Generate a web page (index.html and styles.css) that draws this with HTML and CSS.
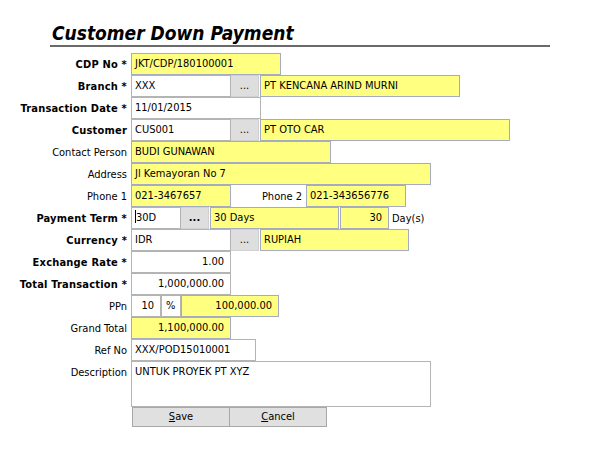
FILE: index.html
```html
<!DOCTYPE html>
<html>
<head>
<meta charset="utf-8">
<link rel="stylesheet" href="styles.css">
</head>
<body>
<div class="page">
  <div class="title-bar"><h1 class="title">Customer Down Payment</h1></div>
  <div class="form">
    <div class="row">
      <div class="lbl b">CDP No *</div>
      <div class="box y w150">JKT/CDP/180100001</div>
    </div>
    <div class="row">
      <div class="lbl b">Branch *</div>
      <div class="box w100">XXX</div>
      <div class="btn">...</div>
      <div class="box y w200 gap">PT KENCANA ARIND MURNI</div>
    </div>
    <div class="row">
      <div class="lbl b">Transaction Date *</div>
      <div class="box w130">11/01/2015</div>
    </div>
    <div class="row">
      <div class="lbl b">Customer</div>
      <div class="box w100">CUS001</div>
      <div class="btn">...</div>
      <div class="box y w250 gap">PT OTO CAR</div>
    </div>
    <div class="row">
      <div class="lbl">Contact Person</div>
      <div class="box y w200">BUDI GUNAWAN</div>
    </div>
    <div class="row">
      <div class="lbl">Address</div>
      <div class="box y w300">Jl Kemayoran No 7</div>
    </div>
    <div class="row">
      <div class="lbl">Phone 1</div>
      <div class="box y w100">021-3467657</div>
      <div class="sublbl">Phone 2</div>
      <div class="box y w100">021-343656776</div>
    </div>
    <div class="row">
      <div class="lbl b">Payment Term *</div>
      <div class="box w50"><span class="caret"></span>30D</div>
      <div class="btn bold">...</div>
      <div class="box y w129 gap">30 Days</div>
      <div class="box y w49 gap num">30</div>
      <div class="unit">Day(s)</div>
    </div>
    <div class="row">
      <div class="lbl b">Currency *</div>
      <div class="box w100">IDR</div>
      <div class="btn">...</div>
      <div class="box y w149 gap">RUPIAH</div>
    </div>
    <div class="row">
      <div class="lbl b">Exchange Rate *</div>
      <div class="box w100 num">1.00</div>
    </div>
    <div class="row">
      <div class="lbl b">Total Transaction *</div>
      <div class="box w100 num">1,000,000.00</div>
    </div>
    <div class="row">
      <div class="lbl">PPn</div>
      <div class="box w30 num">10</div>
      <div class="box w20 pct">%</div>
      <div class="box y w98 num">100,000.00</div>
    </div>
    <div class="row">
      <div class="lbl">Grand Total</div>
      <div class="box y w100 num">1,100,000.00</div>
    </div>
    <div class="row">
      <div class="lbl">Ref No</div>
      <div class="box w125">XXX/POD15010001</div>
    </div>
    <div class="row tall">
      <div class="lbl top">Description</div>
      <div class="box w300 area">UNTUK PROYEK PT XYZ</div>
    </div>
    <div class="row actions">
      <div class="lbl"></div>
      <div class="action"><u>S</u>ave</div>
      <div class="action"><u>C</u>ancel</div>
    </div>
  </div>
</div>
</body>
</html>
```
FILE: styles.css
```css
html, body {
  margin: 0;
  padding: 0;
  background: #fff;
}
body {
  font-family: "DejaVu Sans Condensed", "DejaVu Sans", sans-serif;
  font-size: 11px;
  color: #000;
}
.page {
  padding-top: 21px;
}
.title-bar {
  margin-left: 50px;
  width: 500px;
  border-bottom: 2px solid #6a6a6a;
  padding-left: 2px;
  box-sizing: border-box;
}
.title {
  margin: 0;
  font-family: "DejaVu Sans Condensed", "DejaVu Sans", sans-serif;
  font-size: 19px;
  font-weight: bold;
  font-style: italic;
  line-height: 24px;
}
.form {
  margin-top: 6px;
  display: flex;
  flex-direction: column;
}
.row {
  display: flex;
  align-items: center;
  height: 22px;
}
.row.tall {
  height: 46px;
  align-items: flex-start;
}
.row.actions {
  height: 20px;
}
.lbl {
  width: 131px;
  flex: none;
  box-sizing: border-box;
  padding-right: 4px;
  text-align: right;
  white-space: nowrap;
}
.lbl.b {
  font-weight: bold;
  letter-spacing: 0.2px;
}
.lbl.top {
  padding-top: 5px;
}
.box {
  flex: none;
  height: 22px;
  box-sizing: border-box;
  border: 1px solid #b4b4b4;
  background: #fff;
  padding: 0 3px;
  line-height: 20px;
  white-space: nowrap;
  overflow: hidden;
  position: relative;
}
.box.y {
  background: #ffff80;
  border-color: #a4abc2;
}
.box.gap {
  margin-left: 1px;
}
.box.num {
  text-align: right;
  padding-right: 6px;
}
.box.pct {
  padding: 0 0 0 4px;
}
.box.area {
  height: 46px;
  line-height: 16px;
  padding-top: 2px;
}
.w20 { width: 20px; }
.w30 { width: 30px; }
.w49 { width: 49px; }
.w50 { width: 50px; }
.w98 { width: 98px; }
.w100 { width: 100px; }
.w125 { width: 125px; }
.w129 { width: 129px; }
.w130 { width: 130px; }
.w149 { width: 149px; }
.w150 { width: 150px; }
.w200 { width: 200px; }
.w250 { width: 250px; }
.w300 { width: 300px; }
.btn {
  flex: none;
  width: 28px;
  height: 22px;
  box-sizing: border-box;
  background: #dedede;
  border: 1px solid #d0d0d0;
  border-left: none;
  text-align: center;
  line-height: 20px;
}
.btn.bold {
  font-weight: bold;
}
.sublbl {
  flex: none;
  width: 75px;
  box-sizing: border-box;
  padding-right: 4px;
  text-align: right;
}
.unit {
  margin-left: 3px;
}
.caret {
  display: inline-block;
  width: 1px;
  height: 13px;
  background: #000;
  vertical-align: -2px;
}
.actions .lbl {
  width: 132px;
}
.action {
  flex: none;
  width: 98px;
  height: 20px;
  box-sizing: border-box;
  background: #e0e0e0;
  border: 1px solid #a8a8a8;
  text-align: center;
  line-height: 18px;
}
.action + .action {
  margin-left: -1px;
}
```
